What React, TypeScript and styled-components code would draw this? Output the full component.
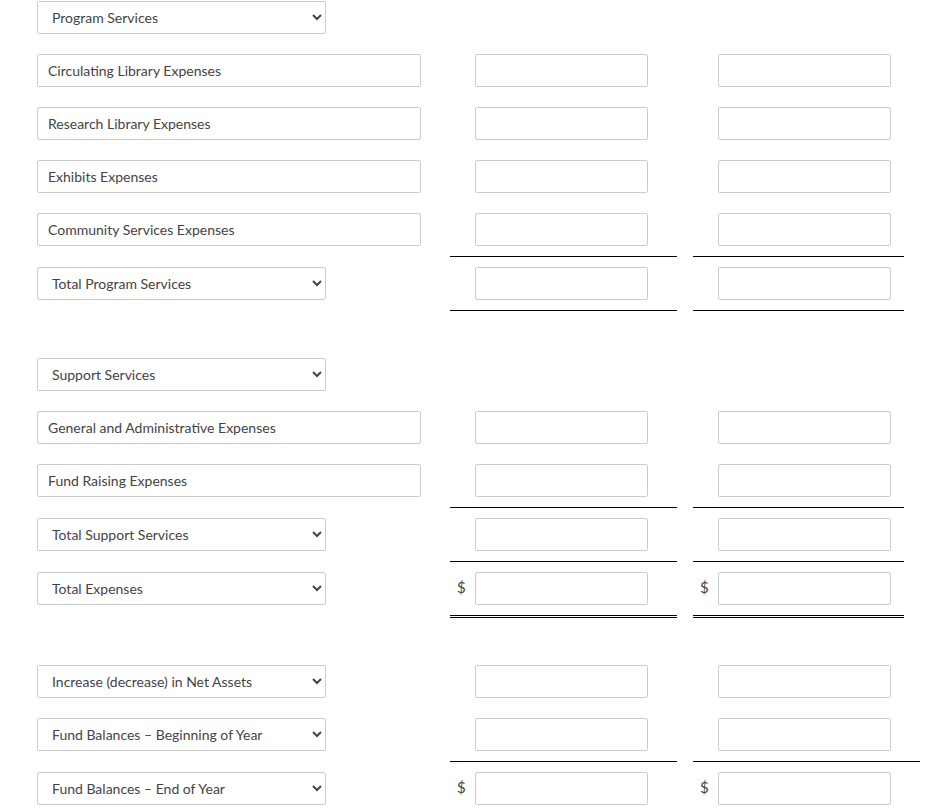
import React from 'react'
import styled, { createGlobalStyle } from 'styled-components'

const GlobalStyle = createGlobalStyle`
  body {
    margin: 0;
    background: #fff;
    font-family: Lato, 'Open Sans', sans-serif;
    color: #444;
  }
`

const Sheet = styled.div`
  padding-top: 1px;
  padding-left: 37px;
  width: 949px;
  box-sizing: border-box;
`

const Row = styled.div`
  display: flex;
  align-items: stretch;
`

const Spacer = styled.div`
  height: 37px;
`

const LabelCell = styled.div<{ $first?: boolean }>`
  width: 413px;
  padding: ${(p) => (p.$first ? '0 0 10px' : '10px 0')};
  display: flex;
  align-items: flex-start;
`

const controlBase = `
  box-sizing: border-box;
  height: 33px;
  border: 1px solid #ccc;
  border-radius: 2px;
  background: #fff;
  font-family: Lato, 'Open Sans', sans-serif;
  font-size: 14px;
  color: #444;
  outline: none;
`

const LabelInput = styled.input`
  ${controlBase}
  width: 384px;
  padding: 0 10px;
`

const LabelSelect = styled.select`
  ${controlBase}
  width: 289px;
  padding: 0 6px 0 10px;
`

type Rule = 'none' | 'single' | 'double'

const AmountCell = styled.div<{ $width: number; $offset?: boolean; $rule: Rule }>`
  box-sizing: border-box;
  width: ${(p) => p.$width}px;
  margin-left: ${(p) => (p.$offset ? '16px' : '0')};
  padding: 10px 0;
  display: flex;
  align-items: center;
  border-bottom: ${(p) =>
    p.$rule === 'single' ? '1px solid #000' : p.$rule === 'double' ? '3px double #000' : '0'};
`

const Dollar = styled.span`
  width: 25px;
  padding-left: 7px;
  box-sizing: border-box;
  font-size: 15px;
  line-height: 1;
  margin-top: -2px;
  color: #444;
`

const AmountInput = styled.input`
  ${controlBase}
  width: 173px;
  padding: 0 8px;
`

type Line = {
  label: string
  kind: 'select' | 'text'
  amounts?: boolean
  dollar?: boolean
  rule?: Rule
  wideLast?: boolean
}

const groups: Line[][] = [
  [
    { label: 'Program Services', kind: 'select' },
    { label: 'Circulating Library Expenses', kind: 'text', amounts: true },
    { label: 'Research Library Expenses', kind: 'text', amounts: true },
    { label: 'Exhibits Expenses', kind: 'text', amounts: true },
    { label: 'Community Services Expenses', kind: 'text', amounts: true, rule: 'single' },
    { label: 'Total Program Services', kind: 'select', amounts: true, rule: 'single' },
  ],
  [
    { label: 'Support Services', kind: 'select' },
    { label: 'General and Administrative Expenses', kind: 'text', amounts: true },
    { label: 'Fund Raising Expenses', kind: 'text', amounts: true, rule: 'single' },
    { label: 'Total Support Services', kind: 'select', amounts: true, rule: 'single' },
    { label: 'Total Expenses', kind: 'select', amounts: true, dollar: true, rule: 'double' },
  ],
  [
    { label: 'Increase (decrease) in Net Assets', kind: 'select', amounts: true },
    { label: 'Fund Balances – Beginning of Year', kind: 'select', amounts: true, rule: 'single', wideLast: true },
    { label: 'Fund Balances – End of Year', kind: 'select', amounts: true, dollar: true },
  ],
]

const StatementRow: React.FC<{ line: Line; first?: boolean }> = ({ line, first }) => {
  const rule = line.rule ?? 'none'
  return (
    <Row>
      <LabelCell $first={first}>
        {line.kind === 'select' ? (
          <LabelSelect defaultValue={line.label}>
            <option>{line.label}</option>
          </LabelSelect>
        ) : (
          <LabelInput defaultValue={line.label} readOnly />
        )}
      </LabelCell>
      {line.amounts && (
        <>
          <AmountCell $width={227} $rule={rule}>
            <Dollar>{line.dollar ? '$' : ''}</Dollar>
            <AmountInput />
          </AmountCell>
          <AmountCell $width={line.wideLast ? 227 : 211} $offset $rule={rule}>
            <Dollar>{line.dollar ? '$' : ''}</Dollar>
            <AmountInput />
          </AmountCell>
        </>
      )}
    </Row>
  )
}

export default function App() {
  return (
    <>
      <GlobalStyle />
      <Sheet>
        {groups.map((group, gi) => (
          <React.Fragment key={gi}>
            {gi > 0 && <Spacer />}
            {group.map((line, li) => (
              <StatementRow key={line.label} line={line} first={gi === 0 && li === 0} />
            ))}
          </React.Fragment>
        ))}
      </Sheet>
    </>
  )
}
